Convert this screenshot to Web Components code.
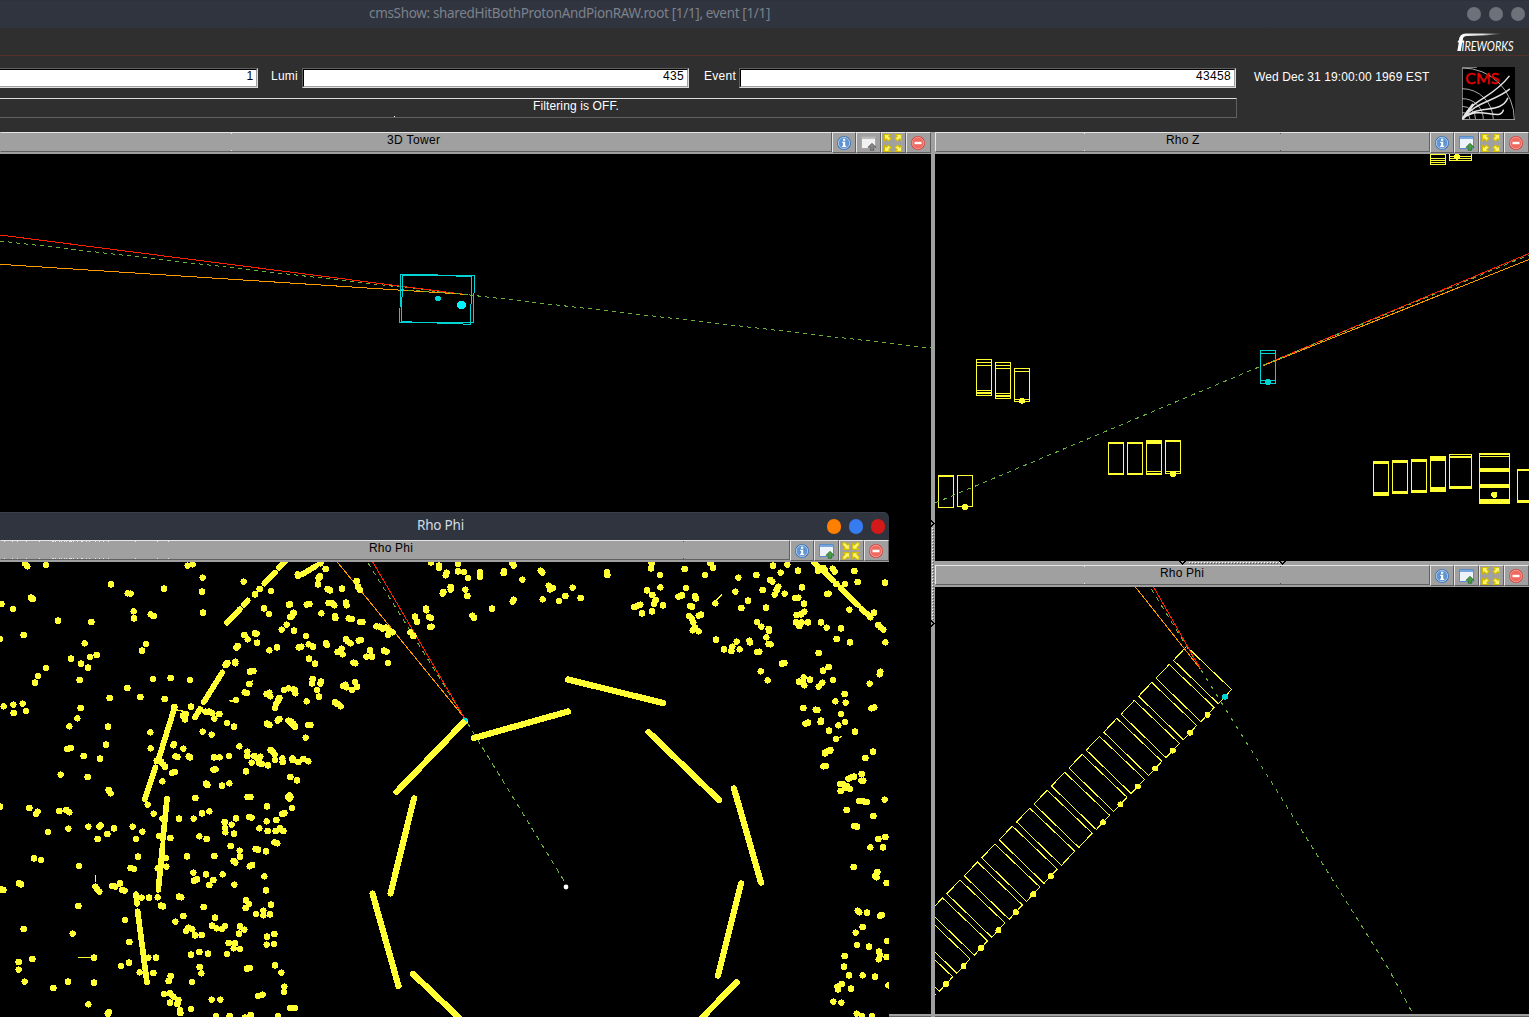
<!DOCTYPE html>
<html lang="en">
<head>
<meta charset="utf-8">
<title>cmsShow</title>
<style>
html,body{margin:0;height:100%;background:#000;overflow:hidden}
body{font:12px "Liberation Sans",Arial,sans-serif;color:#fff}
</style>
</head>
<body>
<cms-app></cms-app>
<script>
const define=(name,html,setup)=>{
  customElements.define(name,class extends HTMLElement{
    connectedCallback(){
      if(this.shadowRoot)return;
      const r=this.attachShadow({mode:'open'});
      r.innerHTML=typeof html==='function'?html(this):html;
      if(setup)setup(this,r);
    }
  });
};

/* text run spread to a fixed width through its letter spacing */
define('fit-text',`<style>:host{display:inline-block;white-space:pre}span{display:inline-block}</style><span><slot></slot></span>`,(el,r)=>{
  const s=r.querySelector('span'),n=el.textContent.length,w=+el.getAttribute('w');
  const gap=(w-s.getBoundingClientRect().width)/n;
  s.style.letterSpacing=gap.toFixed(3)+'px';
});

define('title-bar',el=>`<style>
:host{display:flex;height:28px;box-sizing:border-box;background:linear-gradient(#2b303a 0,#30353f 2px,#2f343f);align-items:center;justify-content:flex-end;
 font:13.5px "Noto Sans",sans-serif;font-stretch:75%;color:#7c818c;position:relative}
:host([active]){color:#d3dae3;border-top-right-radius:5px;border-top:1px solid #3a3f4a;background:#2f343f}
.t{flex:1;display:flex;padding-left:var(--tx);line-height:16px;margin-top:-3px}
.b{display:flex;gap:7.6px;padding-right:3.8px}
i{width:14.4px;height:14.4px;border-radius:50%;background:#6d727a}
:host([active]) i:nth-child(1){background:#ff8000}
:host([active]) i:nth-child(2){background:#367bf0}
:host([active]) i:nth-child(3){background:#d41919}
</style><div class="t"><slot></slot></div><div class="b"><i></i><i></i><i></i></div>`);

define('fireworks-logo',`<style>:host{display:block;width:68px;height:25px}svg{display:block;overflow:visible}</style>
<svg width="68" height="25" viewBox="1455 31 68 25">
<defs><linearGradient id="g"><stop offset="0" stop-color="#fff"/><stop offset=".5" stop-color="#ddd"/><stop offset="1" stop-color="#111"/></linearGradient></defs>
<path d="M1459 40Q1459.5 33.3 1466 33.5L1506 33.6L1487 35.3L1467 35.9Q1463 36 1462.6 40Z" fill="url(#g)"/>
<path d="M1459.7 37.5h3.3L1460.8 51h-3.5zM1458 40.6h6.2l-.3 2h-6.2z" fill="#fff"/>
<text x="1461.5" y="50.9" fill="#fff" font-family="Lato,sans-serif" font-style="italic" font-size="13.600" textLength="52" lengthAdjust="spacingAndGlyphs">IREWORKS</text></svg>`);

define('cms-logo',`<style>:host{display:block;width:53px;height:53px}svg{display:block}</style>
<svg width="53" height="53" viewBox="0 0 159 159">
<path d="M0 0h159v159H0z" fill="#000"/>
<g fill="none" stroke="#aaa" stroke-width="3"><path d="M1.5 159V1.5H45" stroke="#777"/>
<path d="M0 3A155 155 0 0 1 157 159M0 65A94 94 0 0 1 94 159M0 95A62 62 0 0 1 64 159M0 118A40 40 0 0 1 41 159M0 137A22 22 0 0 1 24 159"/><path d="M0 157.500H159" stroke="#999"/></g>
<g fill="none" stroke="#e4e4e4" stroke-width="4.500" stroke-linecap="round"><path d="M3 154C30 95 90 95 141 28M3 154C40 105 95 104 142 67M3 154C45 112 118 142 137 94M3 154C55 112 112 165 124 130"/><path d="M3 154L32 114" stroke-width="8"/></g>
<text x="10" y="52" font-family="Lato,sans-serif" font-size="47" fill="#f00000" stroke="#f00000" textLength="102" lengthAdjust="spacingAndGlyphs">CMS</text></svg>`);

define('number-field',`<style>:host{display:flex;box-sizing:border-box;height:20px;border:1px solid;border-color:#606060 #dcdcdc #dcdcdc #606060}
div{flex:1;border:1px solid;border-color:#000 #a0a0a0 #a0a0a0 #000;background:#fff;color:#000;text-align:right;line-height:13px;padding-right:3px}
:host([first]){border-left:0}:host([first]) div{border-left:0}</style><div><slot></slot></div>`);

define('info-bar',`<style>
:host{display:flex;flex-direction:column;height:104px;background:#2f2f2f}
.menu{border-bottom:1px solid #55302a;display:flex;justify-content:flex-end;align-items:flex-start;padding:3px 6px 0 0;box-sizing:content-box;height:24px}
.body{display:flex;flex:1}
.left{width:1237px;display:flex;flex-direction:column}
.row{display:flex;height:20px;margin-top:12px;align-items:flex-start}
.row>fit-text{line-height:16px}
.filter{box-sizing:border-box;height:20px;margin-top:10px;border:1px solid;border-color:#dcdcdc #606060 #606060 #dcdcdc;border-left:0;display:flex;padding-left:533px;line-height:15px;position:relative}
.filter i{position:absolute;left:394px;top:17px;width:1px;height:1px;background:#fff}
.date{padding:13px 0 0 17px;line-height:16px;width:225px;box-sizing:border-box}
</style>
<div class="menu"><fireworks-logo></fireworks-logo></div>
<div class="body"><div class="left"><div class="row">
<number-field first style="width:258px"><fit-text w="6.500">1</fit-text></number-field>
<fit-text w="27" style="margin-left:13px;width:31px">Lumi</fit-text>
<number-field style="width:387px"><fit-text w="21">435</fit-text></number-field>
<fit-text w="32" style="margin-left:15px;width:35px">Event</fit-text>
<number-field style="width:497px"><fit-text w="35">43458</fit-text></number-field></div>
<div class="filter"><i></i><fit-text w="86">Filtering is OFF.</fit-text></div></div>
<div class="date"><fit-text w="175.500">Wed Dec 31 19:00:00 1969 EST</fit-text></div>
<cms-logo style="margin-top:11px"></cms-logo></div>`);

const arrowOut='M1 1h6L5.300 2.700 7.500 5 5 7.500 2.700 5.300 1 7z';
const arrowIn='M7.200 7.200H1.200L2.900 5.500 .6 3V.6H3L5.500 2.900 7.200 1.200z';
const quad=(d,c)=>[0,1,2,3].map(i=>`<path transform="translate(9 9) scale(${i&1?-1:1} ${i&2?-1:1}) translate(${-c} ${-c})" d="${d}" fill="#fff56a" stroke="#d2bc00" stroke-width="1.100"/>`).join('');
const icons={
 info:`<circle cx="8" cy="8" r="7" fill="#3f74b4"/><circle cx="8" cy="8" r="5.700" fill="#5f94d2" stroke="#b9d0ec" stroke-width=".9"/><path d="M7 3.800h2.200v2H7zM6.200 6.800h3v4h1v1.300H6.100v-1.300h1V8h-.9z" fill="#fff"/>`,
 win:`<path d="M.5 1.500h14v12H.5z" fill="#eef3fa" stroke="#5a8cc8"/><path d="M1 2h13v2H1z" fill="#79a6dc"/><path d="M11 8.300L15 12.300h-2.300v3h-3.400v-3H7z" fill="#4b9a45" stroke="#2d6e2b" stroke-width=".8"/>`,
 wingrey:`<path d="M.5 1.500h14v12H.5z" fill="#f2f2f2" stroke="#a8a8a8"/><path d="M1 2h13v2H1z" fill="#bbb"/><path d="M11 8.300L15 12.300h-2.300v3h-3.400v-3H7z" fill="#858585" stroke="#5c5c5c" stroke-width=".8"/>`,
 expand:quad(arrowOut,9.5),
 shrink:quad(arrowIn,8.8),
 close:`<circle cx="8" cy="8" r="7" fill="#d8403a"/><circle cx="8" cy="8" r="5.800" fill="#ee6a60" stroke="#f6aaa4" stroke-width=".8"/><path d="M4.500 6.800h7v2.400h-7z" fill="#fff"/>`
};
const inset={info:3,win:4,wingrey:4,expand:2,shrink:2,close:3};
define('tool-button',el=>{const k=el.getAttribute('icon'),big=k==='expand'||k==='shrink';const s=big?18:16;
 return `<style>:host{display:flex;box-sizing:border-box;width:25px;height:21px;background:#a0a0a0;border:1px solid;border-color:#e6e6e6 #606060 #606060 #e6e6e6;align-items:center;padding-left:${inset[k]}px}svg{display:block;flex:none}</style><svg width="${s}" height="${s}" viewBox="0 0 ${s} ${s}">${icons[k]}</svg>`});

define('view-header',el=>{
 const ticks=(a,c)=>`<path d="${(el.getAttribute(a)||'').split(' ').filter(Boolean).map(x=>`M${x} 1h1v1h-1zM${x} 18h1v1h-1z`).join('')}" fill="${c}"/>`;
 return `<style>:host{display:flex;height:22px;background:#a0a0a0;color:#000;position:relative;flex:none}
.l{flex:1;box-sizing:border-box;height:20px;border:1px solid;border-color:#e6e6e6 #606060 #606060 #e6e6e6;display:flex;padding-left:var(--lx);line-height:14px}
:host([open]) .l{border-left-color:#a0a0a0}
svg{position:absolute;left:0;top:0;width:100%;height:22px}
tool-button:first-of-type{width:24px}</style>
<div class="l"><slot></slot></div><svg shape-rendering="crispEdges">${ticks('light','#e6e6e6')}${ticks('dark','#505050')}</svg>
<tool-button icon="info"></tool-button><tool-button icon="${el.hasAttribute('docked')?'wingrey':'win'}"></tool-button><tool-button icon="${el.hasAttribute('shrink')?'shrink':'expand'}"></tool-button><tool-button icon="close"></tool-button>`});

define('event-view',`<style>:host{display:flex;flex-direction:column;min-width:0;background:#000;overflow:hidden}.c{flex:1;min-height:0;overflow:hidden;display:flex}</style><slot name="head"></slot><div class="c"><slot></slot></div>`);

const Y='#ffff33',C='#00d4d4',G='#6ab43c',R='#ff2000',O='#ff9a00';
const scene=(x,y,w,h,body)=>`<style>:host{display:block}svg{display:block}</style><svg width="${w}" height="${h}" viewBox="${x} ${y} ${w} ${h}" shape-rendering="crispEdges" fill="none">${body}</svg>`;
const dots=(ox,oy,list)=>`<path transform="translate(${ox} ${oy}) scale(.33333)" stroke="${Y}" stroke-width="19.500" stroke-linecap="round" d="${list.trim().split(/\s+/).map(p=>'M'+p+'h.1').join('')}"/>`;
const line=(d,c,dash)=>`<path d="${d}" stroke="${c}"${dash?` stroke-dasharray="${dash}"`:''}/>`;

define('tower-scene',scene(0,154,931,860,
 line('M0 241L468 294.800L931 348',G,'4 4')+line('M0 235L462 294',R)+line('M0 264.300L465 294.300',O)+line('M400 289.500L468 294.300',G,'4 4')+
 `<path d="M400.700 274.500L474.500 275.500L473.200 322.800L399.700 322.500ZM402.500 275L471.700 276.300L470.500 324.300L401.500 321.600Z" stroke="${C}"/>
 <circle cx="438" cy="298.500" r="3" fill="${C}"/><circle cx="461.500" cy="305" r="4.400" fill="#00f4ff"/>`));

const frame=(x,y,w,h,bars=[],c=Y)=>`<path fill="${c}" d="M${x} ${y}h${w}v1h-${w}zM${x} ${y+h-1}h${w}v1h-${w}zM${x} ${y}h1v${h}h-1zM${x+w-1} ${y}h1v${h}h-1z${bars.map(([b,t])=>`M${x} ${b}h${w}v${t}h-${w}z`).join('')}"/>`;
const dot=(x,y,c=Y)=>`<circle cx="${x}" cy="${y}" r="3" fill="${c}"/>`;
define('rhoz-scene',scene(935,154,594,407,
 frame(976,359,16,37,[[362,1],[365,1],[390,1],[392,2]])+frame(995,362,16,37,[[365,1],[368,1],[393,1],[395,2]])+frame(1014,368,16,34,[[371,1],[399,1]])+dot(1022,400.7)+
 frame(1108,442,16,33,[[442,2],[473,2]])+frame(1127,442,16,33,[[442,2],[473,2]])+frame(1146,440,16,35,[[440,4],[471,1],[473,2]])+frame(1165,440,16,34,[[440,2],[471,1]])+dot(1173,474)+
 frame(938,475,16,33,[[475,2]])+frame(957,475,16,32)+dot(965,507)+
 frame(1373,461,16,35,[[461,3],[492,4]])+frame(1392,460,16,34,[[460,3],[491,3]])+frame(1411,459,16,34,[[459,3],[490,3]])+frame(1430,456,16,36,[[456,5],[487,5]])+frame(1449,454,23,35,[[456,2],[486,3]])+
 frame(1479,453,31,51,[[453,2],[456,1],[468,4],[484,4],[499,5]])+dot(1494.3,494.7)+frame(1517,469,16,34,[[469,2],[500,3]])+
 frame(1430,145,16,20,[[154,1],[158,1],[160,1],[162,1]])+frame(1449,145,23,16,[[156,1],[158,1]])+dot(1457,156.7)+
 frame(1260,350,16,34,[[353,1],[380,1]],C)+dot(1267.7,382,C)+
 line('M1263 365.200L1529 253.500',R)+line('M1263 365.700L1529 259.500',O)+line('M935 503L1262 365.700L1529 255',G,'4.340 4.340')));

let boxes='',hits='';
for(let i=0;i<20;i++){
  const dx=-17.43*i,dy=17.96*i,p=(a,b)=>`${(1186.6+a+dx).toFixed(2)} ${(646.5+b+dy).toFixed(2)}`;
  boxes+=`M${p(0,0)}L${p(45,43)}L${p(31.7,57.3)}L${p(-13.1,13.8)}Z`;
  if(i&&i!==8&&i!==9)hits+=dot(1225+dx,696.7+dy);
}
define('rhophi-zoom-scene',scene(935,587,594,427,
 line(boxes,Y)+dot(1225,696.7,C)+hits+line('M1135.700 587.300L1200.700 669.300',O)+line('M1151.300 589L1200.700 669.300L1247.700 744.500L1388 968L1413 1014',G,'4.720 4.720')+line('M1153.700 587.300L1200.700 669.300',R)));

define('rhophi-scene',scene(0,562,889,455,
 line('M337.300 562L464.500 718',O)+line('M368 563L465 719L566 884',G,'4.720 4.720')+line('M372.700 562L465 719',R)+
 dots(0,500,`75,190 82,199 138,195 563,197 578,193 333,253 383,280 392,281 492,266 608,233 606,275 609,338 731,245 779,267 813,273 893,223 894,228 867,314 792,325 807,342 881,339 870,351 860,374 845,389 882,392 93,293 98,297 4,312 39,327 174,362 274,366 401,334 402,355 452,343 461,348 71,405 0,417 254,430 290,465 270,471 213,476 243,491 264,503 239,540 438,432 426,452 733,405 743,418 765,400 770,401 771,428 713,438 709,443 808,451 831,442 896,442 138,504 114,528 105,548 459,537 512,534 570,540 382,564 329,594 421,591 494,597 11,619 40,614 68,611 41,639 78,633 242,624 232,655 208,679 324,680 451,697 318,734 202,747 212,744 251,768 300,776 452,745 520,736 522,732 550,746 526,769 532,771 566,769 570,772 706,485 706,490 682,489 677,495 750,515 760,513 748,552 734,577 741,579 708,600 800,582 808,578 811,589 852,570 865,565 884,570 886,580 838,594 834,602 829,610 825,624 573,620 523,621 558,642 549,647 555,658 616,635 627,635 637,640 643,656 658,642 681,669 702,680 608,695 635,704 801,671 808,675 838,657 833,662 865,662 873,669 880,675 885,681 718,739 742,755 742,768 763,768 770,773 781,770 812,750 820,757 824,763 642,772 659,772 687,768 847,775 877,775 765,283`)+
 dots(0,760,`300,-4 182,44 263,51 326,90 332,100 0,140 88,144 113,155 108,162 178,153 199,150 208,157 144,216 205,206 265,200 302,196 298,200 342,205 322,222 293,237 398,200 427,215 408,237 470,3 483,5 490,14 495,20 516,39 524,36 487,64 443,134 461,161 487,176 511,234 477,228 537,176 581,176 586,114 606,160 628,154 598,229 620,237 640,29 647,28 738,34 755,8 777,8 785,12 804,16 825,0 848,6 878,0 895,6 871,51 891,61 618,71 622,75 666,77 688,70 743,111 751,111 865,111 871,111 868,106 868,116 801,139 876,144 853,159 847,162 674,186 695,194 708,175 675,204 676,217 702,221 748,171 755,173 778,205 800,184 829,180 803,213 827,213 840,205 850,213 823,247 832,250 692,258 719,272 720,290 701,303 706,308 767,267 774,269 798,274 757,315 749,319 643,288 561,289 414,290 392,324 402,327 497,294 499,320 473,325 580,338 591,358 582,362 618,343 640,360 628,375 668,343 703,374 793,349 798,391 102,295 123,300 237,318 57,370 63,373 4,388 10,390 286,380 292,388 298,395 337,378 346,380 360,370 367,390 374,392 235,438 425,413 447,413 473,412 483,437 489,439 537,410 544,412 375,480 611,441 738,421 747,432 737,444 768,462 790,452 790,466 810,463 813,434 550,468 526,485 565,503 558,513 577,508 585,526 605,525 645,473 636,497 650,505 666,507 675,498 720,499 733,509 717,521 71,507 218,521 388,546 282,593 97,597 56,606 56,629 74,665 204,665 160,684 282,668 265,733 327,756 323,762 363,618 387,608 445,593 468,593 419,637 460,639 512,648 506,663 573,584 598,576 624,581 599,621 604,640 576,666 686,549 705,550 701,565 720,567 681,582 801,530 823,522 800,554 822,552 825,616 844,638 741,626 750,624 853,680 852,696 774,708 788,704 492,702 510,700 520,710 510,728 535,720 532,732 540,750 541,759 573,747 635,719 661,719 648,768 689,768 735,773 752,765 834,768 870,744 884,744 925,4`)+
 dots(290,500,`25,225 91,190 107,207 90,229 86,234 84,253 113,267 120,271 156,266 200,243 204,260 210,270 50,314 58,312 116,309 128,310 133,316 168,308 170,316 94,340 135,348 136,354 176,355 185,357 211,366 217,366 0,313 10,338 5,350 12,392 48,408 27,442 34,440 56,433 69,440 108,430 111,435 57,476 75,491 168,418 173,424 182,430 206,422 212,420 155,446 143,456 158,463 240,451 229,470 246,470 282,452 290,455 190,488 196,490 294,489 259,379 268,380 278,386 288,383 298,392 308,397 294,405 361,397 370,408 375,350 381,365 408,326 409,331 417,351 423,354 420,381 425,380 423,187 447,197 447,203 470,218 467,226 504,192 504,214 522,216 534,234 570,217 570,231 482,261 482,269 460,276 458,281 526,269 532,288 547,347 552,353 606,326 642,213 641,219 667,190 671,197 697,239 671,299 668,305 752,212 757,218 776,257 780,268 789,264 758,298 848,263 826,288 807,303 872,294 68,537 66,550 93,545 91,551 81,570 87,590 11,568 15,578 50,604 160,558 169,562 166,554 195,546 201,560 186,570 135,607 143,612 152,619 3,665 10,672 15,680 54,675 61,675 47,713 8,777 40,777`)+
 dots(590,500,`51,217 52,225 185,190 183,205 210,225 284,207 345,225 361,190 369,203 445,233 436,275 499,225 474,302 454,324 549,197 592,194 572,218 624,212 541,240 547,245 565,260 560,270 554,284 518,270 584,281 528,323 636,262 616,294 625,293 642,311 643,335 620,345 633,343 618,367 635,367 654,367 628,378 693,367 710,383 753,385 740,417 780,427 686,459 711,282 716,281 684,212 700,204 704,210 728,206 734,215 793,213 803,246 765,252 739,252 778,329 852,338 841,352 885,248 865,375 872,382 880,389 886,427 211,262 171,271 187,285 197,300 192,312 219,316 186,334 156,340 133,321 143,317 151,314 288,264 265,290 276,286 315,289 318,295 300,318 306,320 376,310 297,348 305,355 310,368 315,383 308,391 326,394 326,347 333,344 378,419 402,448 440,425 427,440 424,453 449,448 478,422 480,427 501,366 514,380 536,387 537,393 529,412 536,432 542,433 502,456 508,455 576,491 583,489 512,514 533,541 641,532 627,545 639,547 643,556 660,539 716,501 699,512 729,540 697,548 686,560 764,582 736,604 767,608 640,624 677,629 682,630 753,642 765,666 745,676 693,662 692,666 646,671 654,668 717,692 795,695 738,717 705,758 712,754 721,750 839,551 871,515 869,523 844,625 853,622 849,755 826,774`)+
 dots(700,750,`375,10 390,3 370,49 378,48 519,5 495,24 485,72 484,92 490,92 445,86 462,80 455,82 420,102 430,103 440,108 450,117 436,113 422,123 478,153 490,154 500,156 554,149 440,180 520,198 463,228 471,230 556,261 535,267 511,292 549,292 461,351 532,366 526,378 530,382 560,399 473,482 478,487 501,488 545,495 540,498 488,531 467,548 471,585 507,590 562,573 434,618 432,650 447,676 488,676 525,680 537,605 540,615 536,628 560,621 565,706 425,702 412,710 414,718 453,716 400,755 424,758 470,791 486,799 516,799`)+
 `<g transform="translate(0 500) scale(.33333)" stroke="${Y}" stroke-width="17" stroke-linecap="round"><path d="M855 185L837 203M825 218L793 251M743 301L732 314M720 327L681 368M667 517L611 607M600 627L585 652M523 625L475 780M466 802L434 898M501 895L489 1018M488 1034L475 1170M408 1182L411 1212M413 1234L441 1448M908 222L948 198M2440 185L2498 240M2522 264L2575 316M2586 328L2610 350"/><path stroke-width="4" d="M690 603H708M748 552L757 543M523 628L550 634M235 1373H280M286 1126V1145M2146 303L2165 284M2508 716L2524 710"/></g>
 <path stroke="${Y}" stroke-width="6.200" stroke-linecap="round" d="M568 679.500L663 703M474 738L568 711.500M396.500 792L464.500 721.500M414 798.500L390.500 893.500M372.500 893.500L398.500 986M413 974L470 1028M648.500 732L719 800M734 788.500L761 882.500M741 883.500L718 975.500M736.500 982.500L690 1030"/>
 <path d="M463 718h4l1 2-1.500 2z" fill="#00e0e0"/><circle cx="566" cy="887" r="2.400" fill="#fff" shape-rendering="auto"/>`));

define('v-sash',`<style>:host{display:block;width:4px;background:#a0a0a0}svg{display:block}</style><svg width="4" height="885" viewBox="931 132 4 885" shape-rendering="crispEdges"><path d="M932.500 528V620" stroke="#fff" stroke-dasharray="1 2"/><path d="M933.500 529V620" stroke="#555" stroke-dasharray="1 2"/><path d="M931 520.500L934 523.500L931 526.500M931 620.500L934 623.500L931 626.500" fill="none" stroke="#000" stroke-width="1.300"/></svg>`);
define('h-sash',`<style>:host{display:block;height:4px;background:#a0a0a0;flex:none}svg{display:block}</style><svg width="594" height="4" viewBox="935 561 594 4" shape-rendering="crispEdges"><path d="M1189 562.500H1280" stroke="#fff" stroke-dasharray="1 2"/><path d="M1190 563.500H1280" stroke="#555" stroke-dasharray="1 2"/><path d="M1179 561L1182.500 564L1186 561M1279 561L1282.500 564L1286 561" fill="none" stroke="#000" stroke-width="1.300"/></svg>`);

define('float-window',`<style>:host{display:flex;flex-direction:column;width:889px;height:505px;background:#000;border-top-right-radius:5px;overflow:hidden}event-view{flex:1;min-height:0}</style>
<title-bar active style="--tx:417px"><fit-text w="47">Rho Phi</fit-text></title-bar>
<event-view><view-header slot="head" open shrink light="4 12 17 26 39 52 53 55 59 61 64 66 69 70 71 73 77 81 82 86 89 95 99 103 108 135 157 168" dark="683" style="--lx:368px"><fit-text w="44">Rho Phi</fit-text></view-header><rhophi-scene></rhophi-scene></event-view>`);

define('cms-app',`<style>
:host{display:flex;flex-direction:column;width:1529px;height:1017px;position:relative;overflow:hidden;background:#000}
.views{display:flex;flex:1;min-height:0}
.col{display:flex;flex-direction:column}
.l{width:931px}.r{width:594px}
.grow{flex:1;min-height:0}
.foot{height:3px;box-sizing:border-box;background:#a0a0a0;border-bottom:1px solid #606060}
float-window{position:absolute;left:0;top:512px}
</style>
<title-bar style="--tx:369px"><fit-text w="401">cmsShow: sharedHitBothProtonAndPionRAW.root [1/1], event [1/1]</fit-text></title-bar>
<info-bar></info-bar>
<div class="views">
<div class="col l"><event-view class="grow"><view-header slot="head" open docked light="231" style="--lx:386px"><fit-text w="53.500">3D Tower</fit-text></view-header><tower-scene></tower-scene></event-view><div class="foot"></div></div>
<v-sash></v-sash>
<div class="col r"><event-view style="height:429px"><view-header slot="head" light="149" dark="345" style="--lx:230px"><fit-text w="33.500">Rho Z</fit-text></view-header><rhoz-scene></rhoz-scene></event-view>
<h-sash></h-sash>
<event-view class="grow"><view-header slot="head" light="149" dark="345" style="--lx:224px"><fit-text w="44">Rho Phi</fit-text></view-header><rhophi-zoom-scene></rhophi-zoom-scene></event-view><div class="foot"></div></div>
</div>
<float-window></float-window>`);
</script>
</body>
</html>
